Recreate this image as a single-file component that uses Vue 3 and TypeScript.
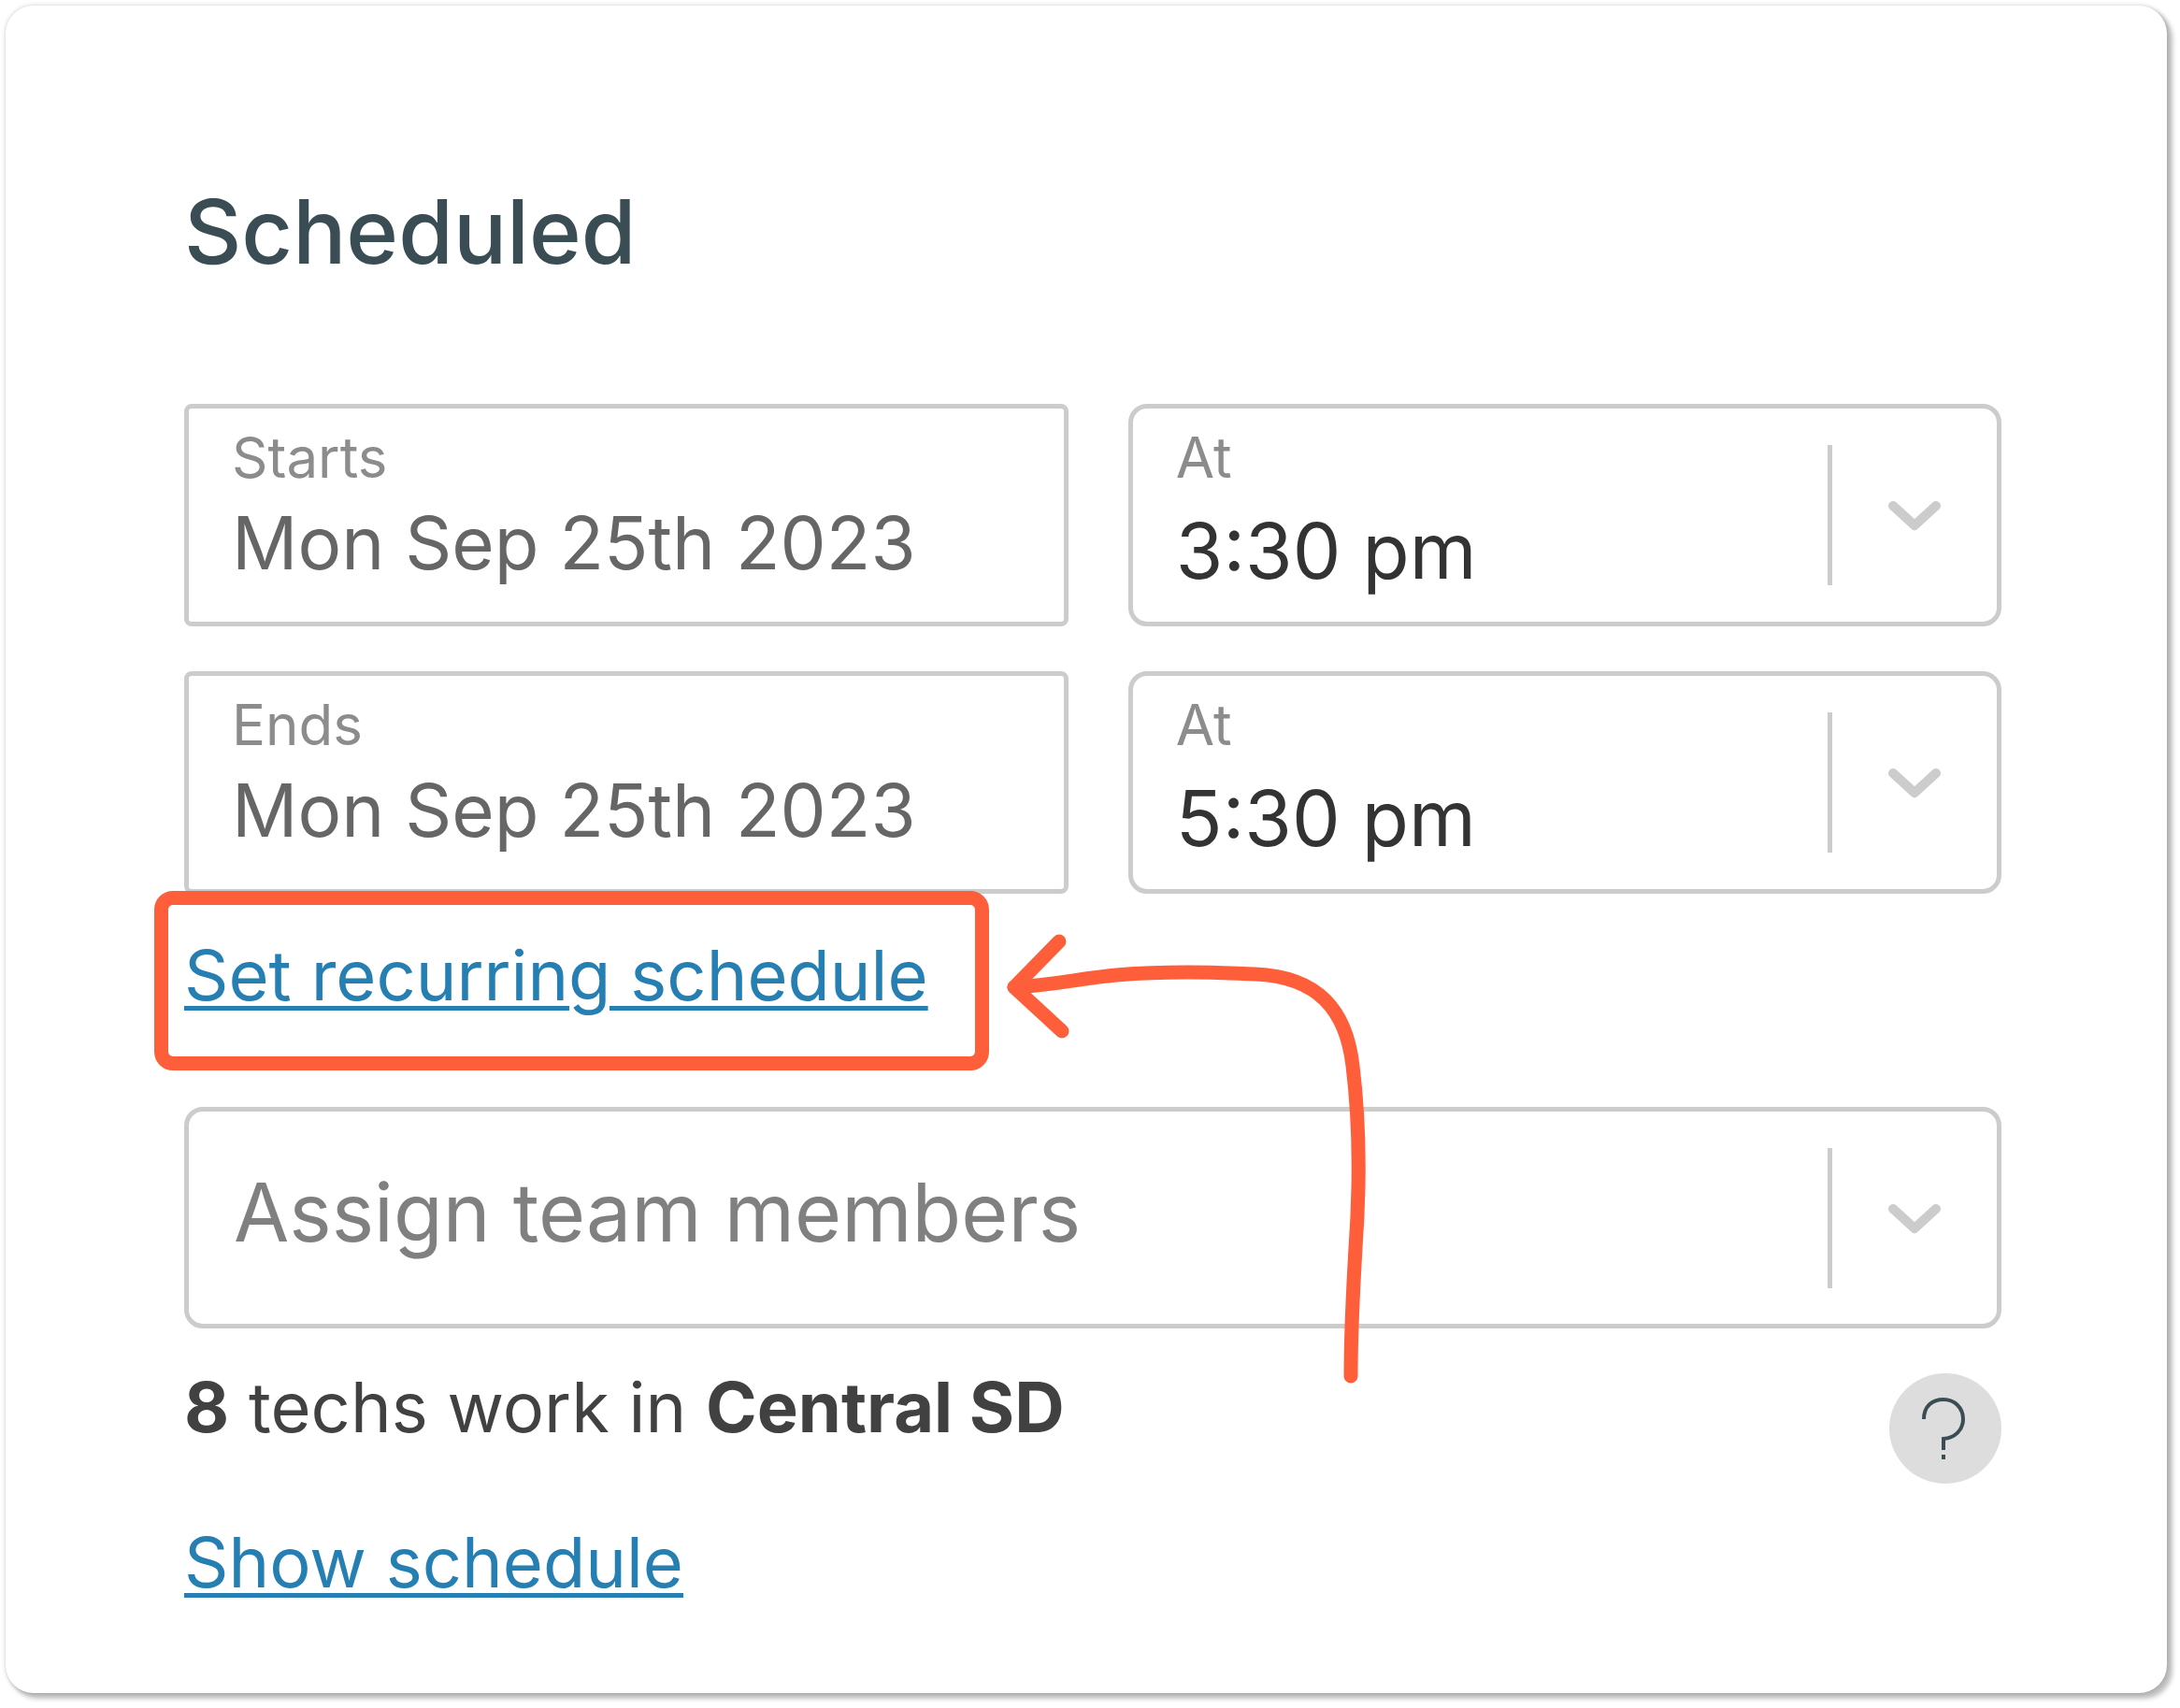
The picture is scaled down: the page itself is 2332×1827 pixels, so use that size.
<script setup lang="ts">
import { ref } from 'vue'

interface TimeSlot {
  id: string
  dateLabel: string
  date: string
  time: string
}

const slots = ref<TimeSlot[]>([
  { id: 'starts', dateLabel: 'Starts', date: 'Mon Sep 25th 2023', time: '3:30 pm' },
  { id: 'ends', dateLabel: 'Ends', date: 'Mon Sep 25th 2023', time: '5:30 pm' },
])
const times = ['3:30 pm', '5:30 pm']
const techCount = 8
const region = 'Central SD'
</script>

<template>
  <main class="card">
    <h1 class="title">Scheduled</h1>

    <div class="slots">
      <template v-for="slot in slots" :key="slot.id">
        <div class="field date-field">
          <label class="label" :for="slot.id + '-date'">{{ slot.dateLabel }}</label>
          <input :id="slot.id + '-date'" v-model="slot.date" class="value date" type="text" />
        </div>
        <div class="field select-field">
          <div class="select-body">
            <label class="label" :for="slot.id + '-time'">At</label>
            <select :id="slot.id + '-time'" v-model="slot.time" class="value time">
              <option v-for="t in times" :key="t" :value="t">{{ t }}</option>
            </select>
          </div>
          <span class="divider"></span>
          <svg class="chevron" viewBox="0 0 56 34" aria-hidden="true">
            <path d="M5 7 L28 28 L51 7" />
          </svg>
        </div>
      </template>
    </div>

    <div class="recurring">
      <a class="link" href="#recurring">Set recurring schedule</a>
      <span class="highlight"></span>
      <svg class="arrow" viewBox="0 0 400 500" aria-hidden="true">
        <path
          d="M20 66 C88 62 103 50 205 50 C235 50 250 51 278 52 C345 55 375 90 382 150 C390 215 390 275 385 345 C382 400 380 430 380 482"
        />
        <path d="M68 17 L20 66 L71 113" />
      </svg>
    </div>

    <div class="field select-field">
      <select class="value team" aria-label="Assign team members">
        <option>Assign team members</option>
      </select>
      <span class="divider"></span>
      <svg class="chevron" viewBox="0 0 56 34" aria-hidden="true">
        <path d="M5 7 L28 28 L51 7" />
      </svg>
    </div>

    <div class="summary">
      <p class="techs"><b>{{ techCount }}</b> techs work in <b>{{ region }}</b></p>
      <button class="help" type="button" aria-label="Help">
        <svg viewBox="0 0 48 70" aria-hidden="true">
          <path d="M3 25 C3 11 12 4 24 4 C36 4 45 13 45 25 C45 37 36 45 24 46 L24 58" />
          <path d="M24 63 V68" />
        </svg>
      </button>
    </div>

    <a class="link" href="#schedule">Show schedule</a>
  </main>
</template>

<style>
body {
  margin: 0;
  background: #fff;
}
</style>

<style scoped>
.card {
  box-sizing: border-box;
  margin: 6px 14px 14px 6px;
  padding: 190px 177px 100px 191px;
  border-radius: 30px;
  background: #fff;
  box-shadow: 5px 5px 5px 1px rgba(0, 0, 0, 0.25), 0 0 5px rgba(0, 0, 0, 0.2);
  font-family: Inter, "Liberation Sans", sans-serif;
  color: #414141;
}

.title {
  margin: 0 0 132px;
  font-size: 95px;
  line-height: 104px;
  font-weight: 500;
  color: #3b4d54;
}

.slots {
  display: grid;
  grid-template-columns: 81fr 80fr;
  gap: 48px 64px;
}

.field {
  box-sizing: border-box;
  height: 237px;
  border: 5px solid #ccc;
  border-radius: 20px;
}

.slots .field {
  height: 238px;
}

.date-field {
  display: flex;
  flex-direction: column;
  padding: 22px 46px 0;
  border-radius: 8px;
}

.select-field {
  display: flex;
  align-items: center;
}

.select-body {
  display: flex;
  flex: 1;
  flex-direction: column;
  align-self: stretch;
  padding: 22px 46px 0;
}

.label {
  font-size: 60px;
  line-height: 60px;
  color: #8c8c8c;
}

.value {
  box-sizing: border-box;
  width: 100%;
  height: 100px;
  margin: 0;
  padding: 0;
  border: 0;
  outline: 0;
  background: transparent;
  appearance: none;
  font-family: inherit;
  font-size: 82px;
  line-height: 100px;
}

.date {
  margin-top: 12px;
  font-size: 78px;
  color: #666;
}

.time {
  margin-top: 21px;
  color: #333;
}

.team {
  flex: 1;
  height: 120px;
  margin-bottom: 12px;
  padding-left: 48px;
  font-size: 86px;
  line-height: 120px;
  color: #808080;
}

.divider {
  width: 5px;
  height: 150px;
  background: #ccc;
}

.chevron {
  width: 56px;
  height: 34px;
  margin: 0 60px;
  fill: none;
  stroke: #ccc;
  stroke-width: 10px;
  stroke-linecap: round;
  stroke-linejoin: round;
}

.link {
  font-size: 74px;
  line-height: 80px;
  color: #267fb3;
  text-decoration: underline;
  text-decoration-thickness: 5px;
  text-underline-offset: 6px;
}

.recurring {
  position: relative;
  width: 812px;
  margin: 47px 0 101px;
}

.recurring .link,
.card > .link {
  display: block;
  width: fit-content;
}

.highlight {
  position: absolute;
  inset: -50px -49px -62px -32px;
  border: 15px solid #ff5e3a;
  border-radius: 20px;
  pointer-events: none;
}

.arrow {
  position: absolute;
  top: -13px;
  left: calc(100% + 56px);
  width: 400px;
  height: 500px;
  fill: none;
  stroke: #ff5e3a;
  stroke-width: 15px;
  stroke-linecap: round;
  stroke-linejoin: round;
  pointer-events: none;
}

.summary {
  display: flex;
  justify-content: space-between;
  align-items: flex-start;
  margin: 44px 0;
}

.techs {
  margin: 0;
  font-size: 74px;
  line-height: 80px;
}

.help {
  display: flex;
  align-items: center;
  justify-content: center;
  width: 120px;
  height: 118px;
  margin: 4px 0 0;
  padding: 0 4px 0 0;
  border: 0;
  border-radius: 50%;
  background: #ddd;
}

.help svg {
  width: 48px;
  height: 70px;
  fill: none;
  stroke: #3b4d54;
  stroke-width: 4px;
}
</style>
